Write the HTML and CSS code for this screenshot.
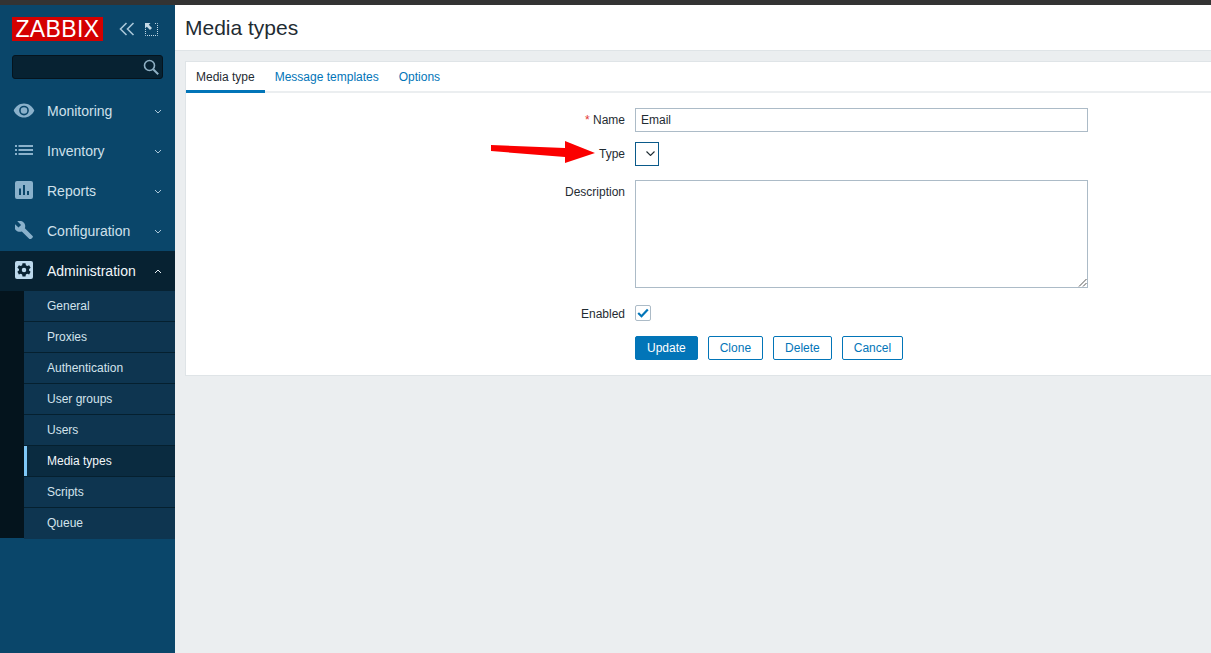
FILE: index.html
```html
<!DOCTYPE html>
<html lang="en">
<head>
<meta charset="utf-8">
<title>Media types</title>
<link rel="stylesheet" href="styles.css">
</head>
<body>
<div class="topbar"></div>
<div class="app">
  <aside class="sidebar">
    <div class="brand">
      <span class="logo">ZABBIX</span>
      <svg class="tool collapse" width="16" height="14" viewBox="0 0 16 14"><path d="M7.500 1 1.500 7l6 6M14.500 1l-6 6 6 6" fill="none" stroke="#a9c6d8" stroke-width="1.600"/></svg>
      <svg class="tool expand" width="13" height="13" viewBox="0 0 13 13"><path d="M.5 6v6.500h12V.5H9" fill="none" stroke="#c4d9e6" stroke-width="1" stroke-dasharray="1 1"/><path d="M0 0h5.500L3.800 1.700 7 4.900 5 6.900 1.800 3.700 0 5.500z" fill="#c4d9e6"/></svg>
    </div>
    <div class="search">
      <svg width="16" height="16" viewBox="0 0 16 16"><circle cx="6.500" cy="6.500" r="5" fill="none" stroke="#8fb0c4" stroke-width="1.600"/><path d="m10.200 10.200 5 5" stroke="#8fb0c4" stroke-width="2"/></svg>
    </div>
    <nav class="menu">
      <a class="item">
        <svg class="icon eye" width="22" height="15" viewBox="0 0 22 16"><path fill-rule="evenodd" d="M11 .5C6 .5 2 3.500 0 8c2 4.500 6 7.500 11 7.500S20 12.500 22 8C20 3.500 16 .5 11 .5zM11 13.200a5.200 5.200 0 1 1 0-10.400 5.200 5.200 0 0 1 0 10.400zm0-8.700a3.500 3.500 0 1 0 0 7 3.500 3.500 0 0 0 0-7z" fill="#8ab1cb"/></svg>
        <span class="label">Monitoring</span>
        <svg class="chev" width="8" height="5" viewBox="0 0 8 5"><path d="m1 1 3 3 3-3" fill="none" stroke="#a9c6d8" stroke-width="1"/></svg>
      </a>
      <a class="item">
        <svg class="icon" width="18" height="10" viewBox="0 0 18 10"><path d="M0 0h2v2H0zM3.500 0H18v2H3.500zM0 4h2v2H0zM3.500 4H18v2H3.500zM0 8h2v2H0zM3.500 8H18v2H3.500z" fill="#8ab1cb"/></svg>
        <span class="label">Inventory</span>
        <svg class="chev" width="8" height="5" viewBox="0 0 8 5"><path d="m1 1 3 3 3-3" fill="none" stroke="#a9c6d8" stroke-width="1"/></svg>
      </a>
      <a class="item">
        <svg class="icon" width="18" height="18" viewBox="0 0 18 18"><path fill-rule="evenodd" d="M2 0h14a2 2 0 0 1 2 2v14a2 2 0 0 1-2 2H2a2 2 0 0 1-2-2V2a2 2 0 0 1 2-2zM4 7.500V14h2V7.500zM8 4v10h2V4zM12 10v4h2v-4z" fill="#8ab1cb"/></svg>
        <span class="label">Reports</span>
        <svg class="chev" width="8" height="5" viewBox="0 0 8 5"><path d="m1 1 3 3 3-3" fill="none" stroke="#a9c6d8" stroke-width="1"/></svg>
      </a>
      <a class="item">
        <svg class="icon" width="18" height="18" viewBox="0 0 19 19"><path d="M18.600 15.900 10.400 7.700c.8-2.100.4-4.500-1.300-6.200C7.300-.3 4.600-.6 2.500.3l3.900 3.900-2.700 2.700L-.3 3.100C-1.200 5.200-.8 7.900 1 9.700c1.700 1.700 4.100 2.100 6.200 1.300l8.200 8.200c.4.400.9.400 1.300 0l1.900-1.900c.4-.4.400-1 0-1.400z" fill="#8ab1cb"/></svg>
        <span class="label">Configuration</span>
        <svg class="chev" width="8" height="5" viewBox="0 0 8 5"><path d="m1 1 3 3 3-3" fill="none" stroke="#a9c6d8" stroke-width="1"/></svg>
      </a>
      <a class="item open">
        <svg class="icon" width="18" height="18" viewBox="0 0 18 18"><rect width="18" height="18" rx="2" fill="#bcd9ec"/><g transform="translate(9 9) scale(1.250) translate(-9 -9)"><path d="M7.800 3.500l-.3 1.600-1.100.6-1.500-.6-1.200 2.100 1.300 1-.1 1.200-1.200 1 1.200 2.100 1.500-.6 1.100.6.300 1.600h2.400l.3-1.600 1.100-.6 1.500.6 1.200-2.100-1.300-1 .1-1.200 1.200-1-1.200-2.100-1.500.6-1.100-.6-.3-1.600z" fill="#072232"/><circle cx="9" cy="9" r="1.800" fill="#bcd9ec"/></g></svg>
        <span class="label">Administration</span>
        <svg class="chev" width="8" height="5" viewBox="0 0 8 5"><path d="m1 4 3-3 3 3" fill="none" stroke="#e6f0f6" stroke-width="1"/></svg>
      </a>
      <ul class="submenu">
        <li>General</li>
        <li>Proxies</li>
        <li>Authentication</li>
        <li>User groups</li>
        <li>Users</li>
        <li class="current">Media types</li>
        <li>Scripts</li>
        <li>Queue</li>
      </ul>
    </nav>
  </aside>
  <main class="main">
    <header class="header"><h1>Media types</h1></header>
    <section class="panel">
      <div class="tabs">
        <span class="tab active">Media type</span>
        <span class="tab">Message templates</span>
        <span class="tab">Options</span>
      </div>
      <form class="form">
        <label class="lab"><span class="req">*</span> Name</label>
        <div class="field"><div class="input">Email</div></div>
        <label class="lab">Type</label>
        <div class="field"><div class="select"><svg width="9" height="5" viewBox="0 0 9 5"><path d="m.5.5 4 4 4-4" fill="none" stroke="#1f2c33" stroke-width="1.100"/></svg></div></div>
        <label class="lab lab-desc">Description</label>
        <div class="field"><div class="textarea"><svg class="grip" width="9" height="9" viewBox="0 0 9 9"><path d="M8.500 1 1 8.500M8.500 5 5 8.500" stroke="#555" stroke-width="1"/></svg></div></div>
        <label class="lab lab-enabled">Enabled</label>
        <div class="field"><div class="check"><svg width="12" height="10" viewBox="0 0 12 10"><path d="M1.200 5 4.500 8.200 10.800 1.500" fill="none" stroke="#0275b8" stroke-width="2.200"/></svg></div></div>
        <div></div>
        <div class="buttons">
          <span class="btn primary">Update</span>
          <span class="btn">Clone</span>
          <span class="btn">Delete</span>
          <span class="btn">Cancel</span>
        </div>
      </form>
    </section>
  </main>
</div>
<svg class="arrow" width="106" height="23" viewBox="0 0 106 23"><path d="M1 4 75 7 75 0 105 12 75 22 75 16 1 10z" fill="#fb0000"/></svg>
</body>
</html>
```

FILE: styles.css
```css
* { box-sizing: border-box; }
html, body { margin: 0; height: 100%; }
body {
  font-family: "Liberation Sans", Arial, sans-serif;
  font-size: 12px;
  color: #1f2c33;
  background: #ebeef0;
  overflow: hidden;
  position: relative;
}
.topbar { height: 5px; background: #333; }
.app { display: flex; height: 648px; }

.sidebar { width: 175px; flex: none; background: #0a466a; }
.brand { display: flex; align-items: center; padding: 12px 0 0 12px; height: 36px; }
.logo {
  width: 91px; height: 24px; background: #d40000; color: #fff;
  font-size: 23px; line-height: 25px; text-align: center; letter-spacing: .4px;
}
.tool { flex: none; }
.collapse { margin-left: 16px; }
.expand { margin-left: 10px; }
.search {
  margin: 14px 12px 0; height: 24px; background: #072232;
  border: 1px solid #05141e; border-radius: 3px;
  display: flex; align-items: center; justify-content: flex-end; padding-right: 3px;
}
.menu { margin-top: 12px; }
.item { display: flex; align-items: center; height: 40px; position: relative; padding-left: 47px; color: #cfe0ea; }
.label { font-size: 14px; }
.icon { position: absolute; left: 15px; top: 50%; transform: translateY(-10px); }
.icon.eye { left: 13px; transform: translateY(-8px); width: 22px; }
.item:nth-child(2) .icon { transform: translateY(-6px); }
.chev { position: absolute; right: 13px; top: 18px; }
.item.open { background: #072232; color: #f2f7fa; }
.submenu {
  list-style: none; margin: 0; padding: 0 0 0 24px;
  background: #04141d; height: 247px;
}
.submenu li {
  height: 31px; line-height: 30px; padding-left: 23px; background: #0e3550;
  border-bottom: 1px solid #05202f; color: #d3e3ec;
}
.submenu li:last-child { border-bottom: 0; }
.submenu li.current { background: #0a2b40; color: #f2f7fa; box-shadow: inset 3px 0 0 #7fc8f7; }

.main { flex: 1; min-width: 0; }
.header { height: 46px; background: #fff; border-bottom: 1px solid #dfe4e7; padding: 9px 0 0 10px; }
h1 { margin: 0; font-size: 21px; font-weight: 400; line-height: 27px; color: #1f2c33; }
.panel {
  margin: 10px 0 0 10px; height: 315px; background: #fff;
  border: 1px solid #dfe4e7; border-right: 0;
}
.tabs { display: flex; height: 31px; border-bottom: 2px solid #ebeef0; }
.tab { padding: 0 10px; height: 31px; line-height: 30px; color: #0275b8; }
.tab.active { color: #1f2c33; border-bottom: 3px solid #0275b8; }
.form {
  display: grid; grid-template-columns: 439px 453px; column-gap: 10px;
  grid-template-rows: 24px 24px 112px 23px 29px;
  row-gap: 10px; padding-top: 15px;
}
.lab { text-align: right; line-height: 24px; color: #1f2c33; }
.lab-desc { margin-top: 4px; }
.lab-enabled { margin-top: 4px; }
.req { color: #e33734; }
.input {
  height: 24px; border: 1px solid #acbbc7; padding-left: 5px; line-height: 22px;
}
.select {
  width: 24px; height: 24px; border: 1px solid #0a5a8a; padding: 0 3px 1px 0;
  display: flex; align-items: center; justify-content: flex-end;
}
.textarea { height: 108px; border: 1px solid #acbbc7; position: relative; margin-top: 4px; }
.grip { position: absolute; right: 0; bottom: 0; }
.check {
  width: 16px; height: 16px; border: 1px solid #acbbc7; border-radius: 2px;
  display: flex; align-items: center; justify-content: center;
  margin-top: 7px;
}
.buttons { display: flex; gap: 10px; margin-top: 5px; }
.btn {
  height: 24px; line-height: 22px; padding: 0 11px; border: 1px solid #0275b8;
  border-radius: 2px; color: #0275b8; background: #fff;
}
.btn.primary { background: #0275b8; color: #fff; }
.arrow { position: absolute; left: 490px; top: 141px; }
```
